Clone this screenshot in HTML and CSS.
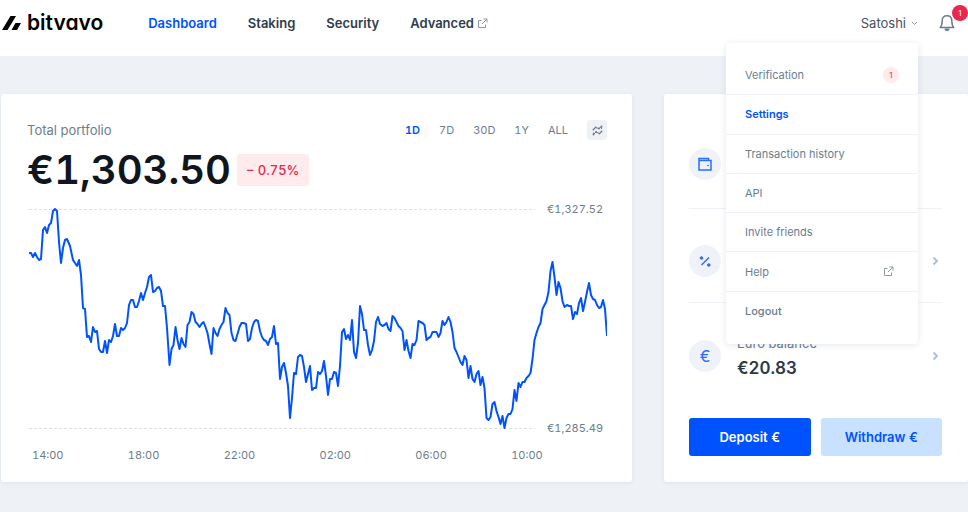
FILE: index.html
```
<!DOCTYPE html>
<html lang="en">
<head>
    <meta charset="utf-8">
    <meta name="viewport" content="width=device-width, initial-scale=1.0">
    <title>Bitvavo - Dashboard</title>
    <link rel="stylesheet" href="styles.css">
</head>

<body>
    <header class="topbar">
        <a class="logo" href="#">
            <svg width="20" height="16" viewBox="0 0 20 16">
                <path d="M1 15L9.500 1H15L6.500 15ZM10.500 15L14.500 8H20L16 15Z"/>
            </svg>
            <span>bitvavo</span>
        </a>
        <nav class="nav">
            <a class="active" href="#">Dashboard</a>
            <a href="#">Staking</a>
            <a href="#">Security</a>
            <a href="#">Advanced
                <svg class="external" width="11" height="11" viewBox="0 0 11 11">
                    <path d="M4.500 2.500H1.500V9.500H8.500V6.500M6.500 1H10V4.500M10 1L5 6"/>
                </svg>
            </a>
        </nav>

        <div class="user">
            <button class="user-button" type="button">
                Satoshi
                <svg width="7" height="5" viewBox="0 0 7 5"><path d="M1 1L3.500 3.500L6 1"/></svg>
            </button>
            <ul class="menu">
                <li><a href="#">Verification <span class="menu-badge">1</span></a></li>
                <li><a class="active" href="#">Settings</a></li>
                <li><a href="#">Transaction history</a></li>
                <li><a href="#">API</a></li>
                <li><a href="#">Invite friends</a></li>
                <li><a href="#">Help
                    <svg class="external" width="11" height="11" viewBox="0 0 11 11">
                        <path d="M4.500 2.500H1.500V9.500H8.500V6.500M6.500 1H10V4.500M10 1L5 6"/>
                    </svg>
                </a></li>
                <li><a class="logout" href="#">Logout</a></li>
            </ul>
        </div>

        <button class="bell" type="button" aria-label="Notifications">
            <svg width="16" height="18" viewBox="0 0 16 18">
                <path class="bell-body" d="M1.200 13.500C2.800 12 3.200 10 3.200 6.800C3.200 3.500 5 1.800 8 1.800S12.800 3.500 12.800 6.800C12.800 10 13.200 12 14.800 13.500Z"/>
                <path class="bell-clapper" d="M5.500 14.500H10.500C10.500 18 5.500 18 5.500 14.500Z"/>
            </svg>
            <span class="bell-count">1</span>
        </button>
    </header>

    <main>
        <!-- Portfolio -->
        <section class="card portfolio">
            <div class="portfolio-header">
                <h2>Total portfolio</h2>
                <div class="periods">
                    <button class="active" type="button">1D</button>
                    <button type="button">7D</button>
                    <button type="button">30D</button>
                    <button type="button">1Y</button>
                    <button type="button">ALL</button>
                    <button class="chart-type" type="button" aria-label="Chart type">
                        <svg width="11" height="11" viewBox="0 0 11 11">
                            <path d="M1.500 4.500L3.500 2.500L7 3.500L9.500 1.500M9.500 1.500V4M1.500 9.500L4 7L7.500 8.500L9.500 6.500M1.500 9.500V7.500"/>
                            <circle cx="1.500" cy="4.500" r="1"/><circle cx="3.500" cy="2.500" r="1"/>
                            <circle cx="7" cy="3.500" r="1"/><circle cx="9.500" cy="1.500" r="1"/>
                            <circle cx="1.500" cy="9.500" r="1"/><circle cx="4" cy="7" r="1"/>
                            <circle cx="7.500" cy="8.500" r="1"/><circle cx="9.500" cy="6.500" r="1"/>
                        </svg>
                    </button>
                </div>
            </div>

            <div class="total">
                <strong>€1,303.50</strong>
                <span class="change">− 0.75%</span>
            </div>

            <div class="chart">
                <div class="limit high"><span>€1,327.52</span></div>
                <div class="limit low"><span>€1,285.49</span></div>
                <svg class="chart-line" viewBox="0 0 578 225" preserveAspectRatio="none">
                    <polyline points="0,47 2,47 4,51 6,47 8,51 10,54 12,53 14,24 16,21 18,27 20,19 22,17 24,5 26,3 28,5 30,36 32,57 34,42 36,34 38,33 41,40 44,54 46,57 48,60 50,54 52,69 54,102 56,103 58,131 60,130 62,136 64,121 66,126 68,125 70,143 72,146 74,146 76,135 78,147 80,134 82,136 84,130 86,118 88,130 90,130 92,122 94,124 96,122 98,117 100,99 102,94 104,94 106,101 108,101 110,95 112,87 114,94 116,87 118,81 120,71 122,69 124,86 126,85 128,82 130,81 132,85 134,100 136,100 138,122
                        140.5,159 142.5,143 144.5,139 146.5,121 148.5,134 150.5,143 152.5,132 154.5,138 156.5,141 158.5,119 160.5,116 162.5,106 164.5,108 166.5,116 168.5,118 170.5,121 172.5,118 174.5,116 176.5,121 178.5,127 180.5,138 182.5,148 184.5,122 186.5,127 188.5,130 190.5,123 192.5,119 194.5,116 196.5,102 198.5,107 200.5,109 202.5,127 204.5,134 206.5,135 208.5,128 210.5,121 212.5,117 214.5,117 217,118 219,135 221,133 223,122 225,116 227,114 229,115 231,125 233,131 235,134 237,135 239,139 241,133 243,131 245,120 247,138 249,137
                        251,173 253,161 255,157 257,167 259,180 261,212 263,192 265,167 267,168 269,151 271,149 273,150 275,161 277,176 279,168 281,160 283,184 285,182 287,182 289,166 291,168 293,165 295,155 297,170 299,189 301,173 303,173 305,166 307,167 309,180 311,160 313,126 315,123 317,133 319,129 321,134 323,114 325,146 327,152 329,137 331,100 333,108 335,124 337,124 339,139 341,149 343,144 345,135 347,116 349,111 351,118 353.5,120 355.5,119 357.5,117 359.5,123 361.5,125 363.5,110 365.5,112 367.5,116 369.5,120 371.5,122 373.5,125
                        375.5,144 377.5,134 379.5,145 381.5,152 383.5,138 385.5,139 387.5,134 389.5,115 391.5,116 393.5,117 395.5,119 397.5,134 399.5,132 401.5,131 403.5,126 407.5,126 409.5,131 411.5,127 413.5,115 415.5,119 417.5,116 419.5,111 421.5,116 423.5,126 425.5,142 427.5,146 429.5,151 431.5,156 433.5,159 435.5,150 437.5,154 439.5,172 441.5,160 443.5,173 445.5,176 447.5,168 449.5,165 451.5,179 453.5,171 455.5,182 457.5,212 459.5,214 461.5,211 463.5,198 465.5,196 467.5,205 469.5,211 471.5,218 473.5,210 475.5,222 477.5,212 479.5,208
                        481.5,208 483.5,203 485.5,184 487.5,195 489.5,177 491.5,181 493.5,176 495.5,176 497.5,172 499.5,170 501.5,167 503.5,153 505.5,134 507.5,127 509.5,121 511.5,117 513.5,103 515.5,99 517.5,95 519.5,86 521.5,65 523.5,56 525.5,71 527.5,89 529.5,76 531.5,82 533.5,95 535.5,101 538,99 540,100 542,100 544,113 546,106 548,108 550,97 552,92 554,105 556,96 558,86 560,77 562,89 564,93 566,94 568,99 570,102 572,101 574,94 576,103 578,130"/>
                </svg>
            </div>
            <div class="hours">
                <span>14:00</span>
                <span>18:00</span>
                <span>22:00</span>
                <span>02:00</span>
                <span>06:00</span>
                <span>10:00</span>
            </div>
        </section>

        <!-- Balances -->
        <section class="card balances">
            <div class="balance">
                <span class="balance-icon">
                    <svg width="16" height="16" viewBox="0 0 16 16">
                        <path d="M2 4.500H14V14H2ZM2 4.500V2.500H11.500V4.500"/>
                        <circle cx="11" cy="9.500" r="0.500"/>
                    </svg>
                </span>
            </div>
            <a class="balance" href="#" aria-label="Staking">
                <span class="balance-icon">
                    <svg width="16" height="16" viewBox="0 0 16 16">
                        <path d="M4.500 12L12 4.500"/>
                        <circle cx="4.500" cy="5" r="1.300"/>
                        <circle cx="11.800" cy="12" r="1.300"/>
                    </svg>
                </span>
                <svg class="chevron" width="7" height="10" viewBox="0 0 7 10"><path d="M1.500 1.500L5 5L1.500 8.500"/></svg>
            </a>
            <a class="balance" href="#">
                <span class="balance-icon">€</span>
                <span class="balance-text">
                    <span>Euro balance</span>
                    <strong>€20.83</strong>
                </span>
                <svg class="chevron" width="7" height="10" viewBox="0 0 7 10"><path d="M1.500 1.500L5 5L1.500 8.500"/></svg>
            </a>
            <div class="actions">
                <button class="deposit" type="button">Deposit €</button>
                <button class="withdraw" type="button">Withdraw €</button>
            </div>
        </section>
    </main>
</body>
</html>
```

FILE: styles.css
```
* {
    margin: 0;
    padding: 0;
    box-sizing: border-box;
}

body {
    background-color: #eef2f7;
    color: #6c7d90;
    font-family: Inter, "Liberation Sans", sans-serif;
    font-size: 13px;
    line-height: 16px;
}

a {
    color: inherit;
    text-decoration: none;
}

button {
    border: none;
    background: none;
    color: inherit;
    font: inherit;
    cursor: pointer;
}

svg {
    fill: none;
    stroke: currentColor;
}

/* Top bar */
.topbar {
    display: flex;
    align-items: center;
    height: 56px;
    padding: 0 13px 10px 1px;
    background-color: white;
}

.logo {
    display: flex;
    align-items: center;
    gap: 6px;
    color: black;
    font-size: 21px;
    font-weight: 600;
    line-height: 24px;
    font-feature-settings: "cv11";
}

.logo svg {
    fill: currentColor;
    stroke: none;
}

.nav {
    display: flex;
    gap: 31px;
    margin-left: 45px;
    color: #2f3c4c;
    font-weight: 600;
}

.nav a {
    display: flex;
    align-items: center;
    gap: 3px;
}

.nav .active {
    color: #0052ff;
}

.external {
    color: #8b9aaa;
}

.user {
    position: relative;
    margin-left: auto;
}

.user-button {
    display: flex;
    align-items: center;
    gap: 5px;
    color: #45525f;
}

.user-button svg {
    color: #8b9aaa;
}

.bell {
    position: relative;
    height: 18px;
    margin-left: 21px;
    color: #6c7d90;
}

.bell svg {
    display: block;
}

.bell-body {
    stroke-width: 1.500;
    stroke-linejoin: round;
}

.bell-clapper {
    fill: currentColor;
    stroke: none;
}

.bell-count {
    position: absolute;
    top: -9px;
    right: -13px;
    width: 16px;
    border-radius: 8px;
    background-color: #e9274f;
    color: white;
    font-size: 8px;
}

/* User menu */
.menu {
    position: absolute;
    top: 28px;
    right: 0;
    z-index: 1;
    display: grid;
    grid-auto-rows: 1fr;
    width: 192px;
    height: 301px;
    padding: 12px 0 14px;
    border-radius: 3px;
    background-color: white;
    box-shadow: 0 1px 6px rgba(40, 60, 90, 0.12);
    font-size: 11px;
    list-style: none;
}

.menu li + li {
    border-top: 1px solid #eef2f7;
}

.menu a {
    display: flex;
    align-items: center;
    justify-content: space-between;
    height: 100%;
    padding: 0 19px;
}

.menu .active {
    color: #0052ff;
    font-weight: 600;
}

.menu .logout {
    font-weight: 500;
}

.menu .external {
    margin-right: 5px;
}

.menu-badge {
    width: 16px;
    border-radius: 8px;
    background-color: #ffeaec;
    color: #e9274f;
    font-size: 8px;
    text-align: center;
}

/* Cards */
main {
    display: grid;
    grid-template-columns: 1fr 304px;
    gap: 32px;
    padding: 38px 0 30px 1px;
}

.card {
    border-radius: 3px;
    background-color: white;
    box-shadow: 0 1px 4px rgba(40, 60, 90, 0.08);
    font-variant-numeric: tabular-nums;
}

.portfolio {
    padding: 26px 25px 19px 26px;
}

.portfolio-header {
    display: flex;
    align-items: center;
    justify-content: space-between;
}

.portfolio-header h2 {
    font-size: 13px;
    font-weight: 400;
}

.periods {
    display: flex;
    align-items: center;
    gap: 19px;
    font-size: 11px;
}

.periods button {
    font-variant-numeric: inherit;
}

.periods .active {
    color: #0052ff;
    font-weight: 600;
}

.chart-type {
    display: grid;
    place-items: center;
    width: 20px;
    height: 20px;
    border-radius: 3px;
    background-color: #eef2f7;
}

.chart-type circle {
    fill: currentColor;
    stroke: none;
}

.total {
    display: flex;
    align-items: center;
    gap: 6px;
    height: 40px;
    margin-top: 10px;
}

.total strong {
    color: #10161e;
    font-size: 40px;
    font-weight: 600;
    line-height: 40px;
}

.change {
    padding: 8px 9px;
    border-radius: 3px;
    background-color: #ffeaec;
    color: #e9274f;
    font-weight: 500;
}

/* Chart: limits and line share the same grid */
.chart {
    display: grid;
    grid-template-rows: 16px 203px 16px;
    margin: 11px 0 0 2px;
    font-size: 11px;
}

.limit {
    grid-column: 1;
    display: flex;
    align-items: center;
    gap: 12px;
}

.limit::before {
    content: "";
    flex: 1;
    height: 1px;
    background: repeating-linear-gradient(90deg, #dbe0e6 0 3px, transparent 3px 5px);
}

.limit span {
    width: 60px;
}

.high {
    grid-row: 1;
}

.low {
    grid-row: 3;
}

.chart-line {
    grid-area: 1 / 1 / 4 / 2;
    align-self: center;
    width: 100%;
    height: 225px;
    color: #0052ff;
    stroke-width: 2;
    stroke-linejoin: round;
}

.hours {
    display: grid;
    grid-template-columns: repeat(6, 1fr);
    margin: 11px 0 0 5px;
    font-size: 11px;
}

/* Balances */
.balances {
    padding: 50px 26px 26px 25px;
}

.balance {
    display: flex;
    align-items: center;
    gap: 16px;
    min-height: 94px;
    padding: 32px 0 21px;
    border-bottom: 1px solid #eef2f7;
}

.balance:first-child {
    min-height: 65px;
    padding: 0 0 24px;
}

.balance:nth-child(3) {
    border-bottom: none;
}

.balance-icon {
    display: grid;
    place-items: center;
    width: 32px;
    height: 32px;
    border-radius: 50%;
    background-color: #eff3f9;
    color: #2e6bff;
    font-size: 16px;
}

.balance-icon path {
    stroke-width: 1.500;
}

.balance-icon circle {
    fill: currentColor;
}

.balance-text {
    display: flex;
    flex-direction: column;
    gap: 9px;
}

.balance-text strong {
    color: #2c3844;
    font-size: 17px;
    font-weight: 600;
}

.chevron {
    margin-left: auto;
    margin-right: 3px;
    color: #b4c0cd;
    stroke-width: 2;
}

.actions {
    display: grid;
    grid-template-columns: 1fr 1fr;
    gap: 10px;
    margin-top: 21px;
}

.actions button {
    padding: 11px 0;
    border-radius: 3px;
    font-weight: 600;
}

.deposit {
    background-color: #0052ff;
    color: white;
}

.actions .withdraw {
    background-color: #c8e1ff;
    color: #0052ff;
}
```
